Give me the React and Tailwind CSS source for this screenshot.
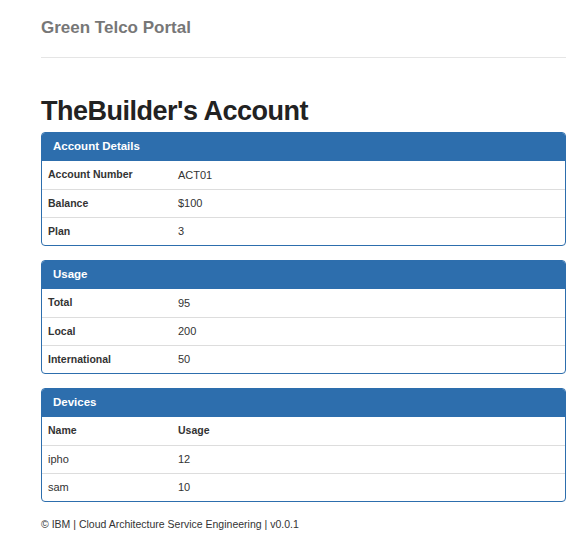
import React from 'react'

const Panel = ({ title, rows, head }) => {
    return (
        <div className="mb-[14px] border border-[#2d6ead] rounded-[4px] overflow-hidden">
            <div className="h-[28px] bg-[#2d6ead] text-white font-bold text-[11.5px] flex items-center px-[11px]">
                {title}
            </div>
            {head ? (
                <div className="grid grid-cols-[130px_1fr] h-[28px] items-center text-[10.5px] font-bold">
                    <div className="pl-[6px]">{head[0]}</div>
                    <div className="pl-[6px]">{head[1]}</div>
                </div>
            ) : null}
            {rows.map((row, i) => (
                <div
                    key={row[0]}
                    className={
                        (i === 0 && !head ? '' : 'border-t border-[#dddddd] ') +
                        'grid grid-cols-[130px_1fr] h-[28px] items-center text-[11px]'
                    }
                >
                    <div className={head ? 'pl-[6px]' : 'pl-[6px] font-bold text-[10.5px]'}>{row[0]}</div>
                    <div className="pl-[6px]">{row[1]}</div>
                </div>
            ))}
        </div>
    )
}

const App = () => {
    return (
        <div className="min-h-[536px] bg-white text-[#333333] font-['Liberation_Sans',Arial,sans-serif]">
            <div className="ml-[41px] w-[525px] pt-[16px]">
                <div className="h-[24px] leading-[24px] text-[17px] font-bold text-[#777777]">
                    Green Telco Portal
                </div>
                <div className="mt-[17px] border-t border-[#e5e5e5]"></div>
                <h1 className="mt-[38px] h-[30px] leading-[30px] text-[27px] font-bold tracking-[-0.5px] text-[#222222]">
                    TheBuilder's Account
                </h1>
                <div className="mt-[6px]">
                    <Panel
                        title="Account Details"
                        rows={[
                            ['Account Number', 'ACT01'],
                            ['Balance', '$100'],
                            ['Plan', '3'],
                        ]}
                    />
                    <Panel
                        title="Usage"
                        rows={[
                            ['Total', '95'],
                            ['Local', '200'],
                            ['International', '50'],
                        ]}
                    />
                    <Panel
                        title="Devices"
                        head={['Name', 'Usage']}
                        rows={[
                            ['ipho', '12'],
                            ['sam', '10'],
                        ]}
                    />
                </div>
                <div className="mt-[1px] h-[17px] leading-[17px] text-[10.5px]">
                    © IBM | Cloud Architecture Service Engineering | v0.0.1
                </div>
            </div>
        </div>
    )
}

export default App
